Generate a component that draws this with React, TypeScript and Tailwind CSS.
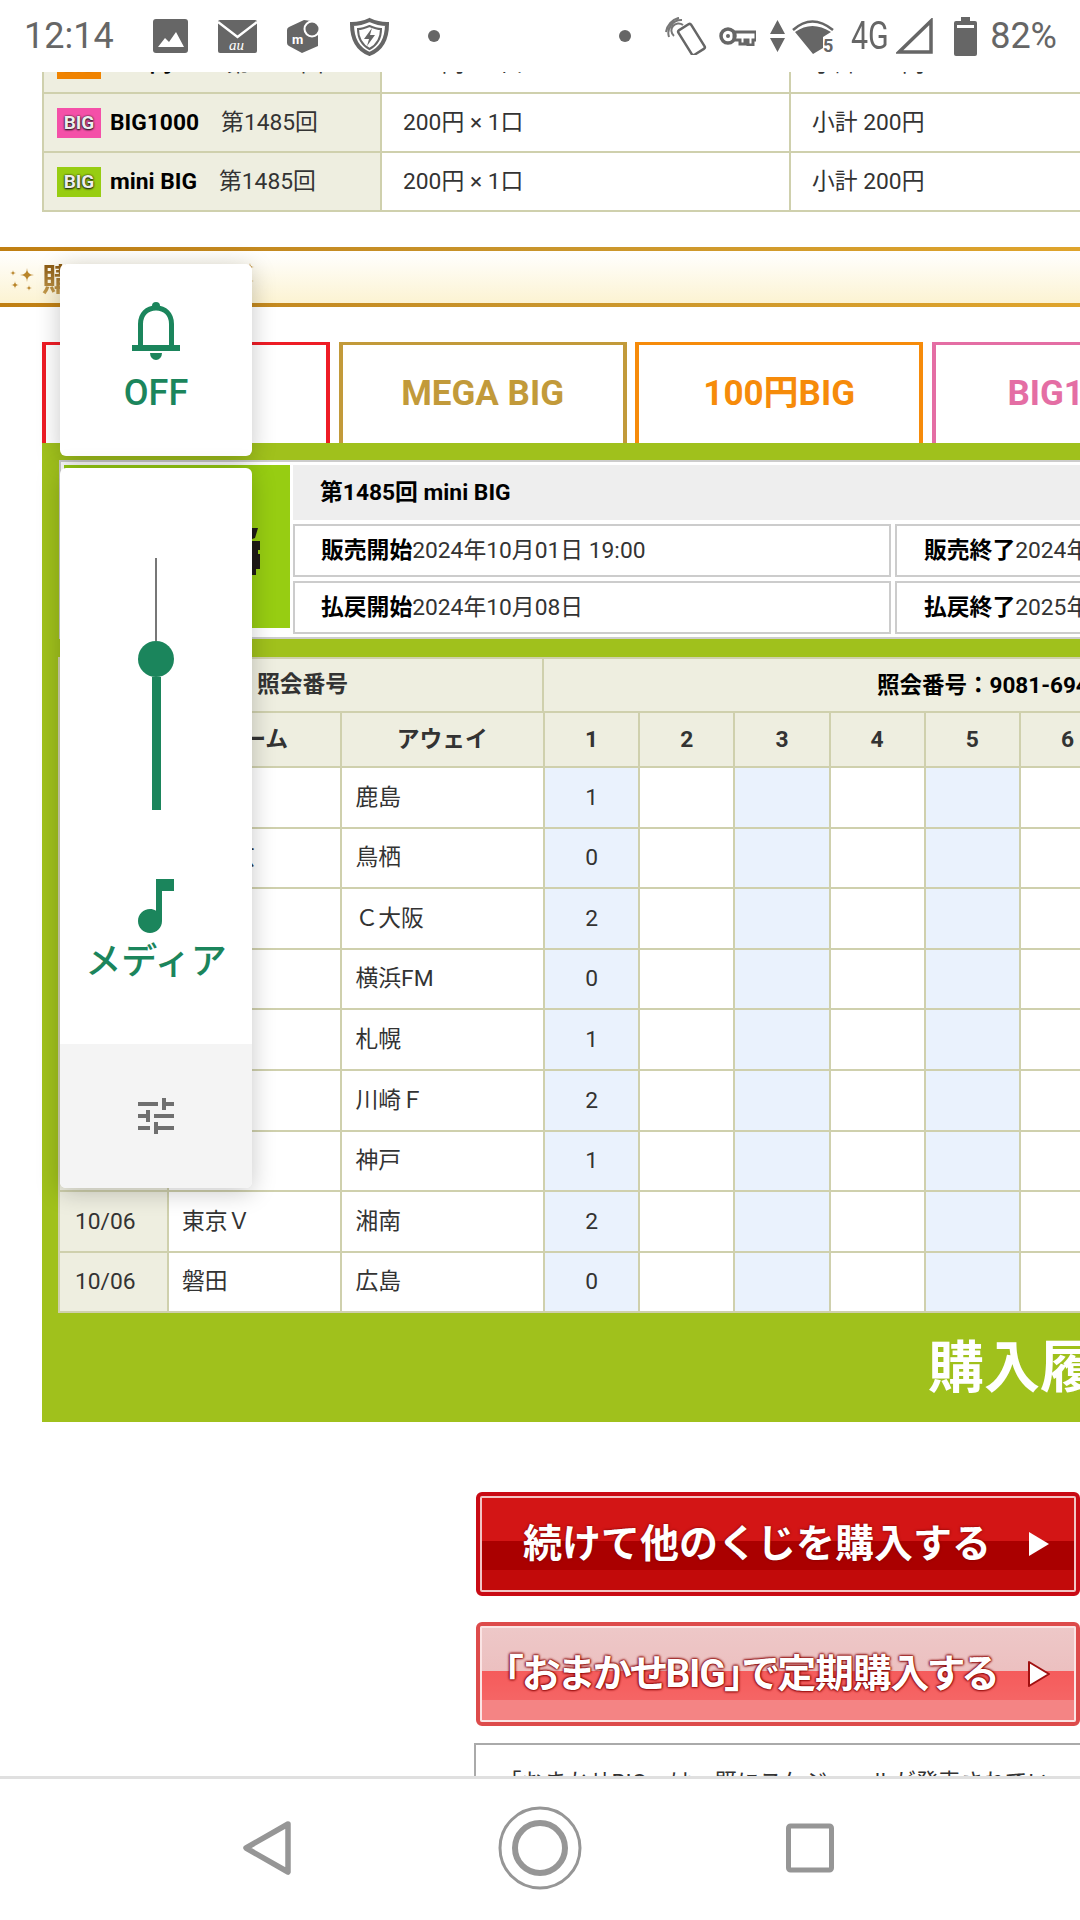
import React from 'react';

const FONT = 'font-[Roboto,"Noto_Sans_CJK_JP",sans-serif]';

const purchases = [
  { logo: 'bg-[#f08300]', name: '100円BIG', gap: 'ml-[18px]', price: '100円', total: '100円' },
  { logo: 'bg-[#f450a8]', name: 'BIG1000', gap: 'ml-[22px]', price: '200円', total: '200円' },
  { logo: 'bg-[#97cd12]', name: 'mini BIG', gap: 'ml-[22px]', price: '200円', total: '200円' },
];

const matches = [
  { date: '', home: '', away: '鹿島', pick: '1' },
  { date: '', home: 'FC東京', away: '鳥栖', pick: '0' },
  { date: '', home: '', away: 'Ｃ大阪', pick: '2' },
  { date: '', home: '', away: '横浜FM', pick: '0' },
  { date: '', home: '', away: '札幌', pick: '1' },
  { date: '', home: '', away: '川崎Ｆ', pick: '2' },
  { date: '', home: '', away: '神戸', pick: '1' },
  { date: '10/06', home: '東京Ｖ', away: '湘南', pick: '2' },
  { date: '10/06', home: '磐田', away: '広島', pick: '0' },
];

const cols = [1, 2, 3, 4, 5, 6];

const StatusBar = () => (
  <div className="flex h-[72px] shrink-0 items-center bg-white pl-[24px] pr-[23px] text-[#666]">
    <span className="w-[90px] text-[36px] leading-none">12:14</span>
    <svg className="ml-[39px]" width="35" height="34" viewBox="0 0 35 34">
      <rect width="35" height="34" rx="3" fill="#666" />
      <path d="M5 28 L12 19 L16 23 L23 13 L31 28Z" fill="#fff" />
    </svg>
    <svg className="ml-[30px]" width="39" height="33" viewBox="0 0 39 33">
      <rect width="39" height="33" rx="2" fill="#666" />
      <path d="M0 2 L19.5 17 L39 2" fill="none" stroke="#fff" strokeWidth="2.5" />
      <text x="11" y="30" fontSize="15" fontStyle="italic" fontFamily="Liberation Serif, serif" fill="#fff">au</text>
    </svg>
    <svg className="ml-[30px]" width="34" height="34" viewBox="0 0 34 34">
      <path d="M17 1 L2 8 Q0 9 0 11 V24 Q0 26 2 27 L15 34 L31 27 V12 L24 2Z" fill="#666" />
      <circle cx="25" cy="10" r="7.5" fill="#666" stroke="#fff" strokeWidth="2" />
      <text x="5" y="25" fontSize="13" fontWeight="700" fontFamily="Roboto, sans-serif" fill="#fff">m</text>
    </svg>
    <svg className="ml-[29px]" width="39" height="39" viewBox="0 0 39 39">
      <path d="M19.5 3 C26 6 31 7 37 7 C37 22 32 32 19.5 37 C7 32 2 22 2 7 C8 7 13 6 19.5 3Z" fill="none" stroke="#666" strokeWidth="4" />
      <path d="M19.5 9 C24 11 27 12 31 12 C31 22 27 28 19.5 32 C12 28 8 22 8 12 C12 12 15 11 19.5 9Z" fill="none" stroke="#666" strokeWidth="2" />
      <path d="M22 11 L14 22 H19 L17 29 L25 18 H20Z" fill="#666" />
    </svg>
    <span className="ml-[39px] h-[12px] w-[12px] rounded-full bg-[#666]" />

    <span className="ml-auto h-[12px] w-[12px] rounded-full bg-[#666]" />
    <svg className="ml-[34px]" width="42" height="38" viewBox="0 0 42 38">
      <path d="M4 20 A13 13 0 0 1 17 3 M1 15 A17 17 0 0 1 14 0.8 M9 19 A7 7 0 0 1 18 8" fill="none" stroke="#777" strokeWidth="2" />
      <rect x="19" y="8" width="15" height="29" rx="2" transform="rotate(-32 26.5 22.5)" fill="#fff" stroke="#666" strokeWidth="2.5" />
    </svg>
    <svg className="ml-[12px]" width="37" height="20" viewBox="0 0 37 20">
      <circle cx="9" cy="10" r="7" fill="none" stroke="#666" strokeWidth="3.5" />
      <circle cx="9" cy="10" r="2" fill="#666" />
      <path d="M15 6 H37 V14 H34 V19 H29 V14 H26 V18 H21 V14 H15Z" fill="none" stroke="#666" strokeWidth="3" />
    </svg>
    <svg className="ml-[14px]" width="15" height="32" viewBox="0 0 15 32">
      <path d="M7.5 0 L15 14 H0Z M0 18 H15 L7.5 32Z" fill="#666" />
    </svg>
    <svg className="ml-[7px]" width="43" height="36" viewBox="0 0 43 36">
      <path d="M1 12 Q20 -5 41 12" fill="none" stroke="#666" strokeWidth="2.5" />
      <path d="M3 14 Q20 2 39 14 L31 19 V30 L21 36Z" fill="#666" />
      <text x="31" y="34" fontSize="18" fontWeight="700" fontFamily="Roboto, sans-serif" fill="#666">5</text>
    </svg>
    <span className="ml-[16px] inline-block w-[38px] origin-left scale-x-[0.8] text-[38px] leading-none">4G</span>
    <svg className="ml-[7px]" width="37" height="36" viewBox="0 0 37 36">
      <path d="M35 3 V34 H3Z" fill="none" stroke="#666" strokeWidth="3.5" />
    </svg>
    <svg className="ml-[21px]" width="23" height="39" viewBox="0 0 23 39">
      <rect x="7" width="9" height="5" fill="#666" />
      <rect y="4" width="23" height="35" rx="2" fill="#666" />
      <rect x="3" y="8" width="17" height="3" fill="#fff" />
    </svg>
    <span className="ml-[13px] text-[36px] leading-none">82%</span>
  </div>
);

const Sparkle = ({ x, y, r }: { x: number; y: number; r: number }) => (
  <path d={`M${x} ${y - r} Q${x} ${y} ${x + r} ${y} Q${x} ${y} ${x} ${y + r} Q${x} ${y} ${x - r} ${y} Q${x} ${y} ${x} ${y - r}Z`} fill="#b9852a" />
);

const PurchaseTable = () => (
  <div className="-mt-[37px] ml-[42px] w-[1100px] border-l-2 border-[#cfd0ad]">
    {purchases.map((p) => (
      <div key={p.name} className="grid h-[59px] grid-cols-[338px_409px_1fr] border-b-2 border-[#cfd0ad] text-[22.8px] text-[#333]">
        <div className="flex items-center border-r-2 border-[#cfd0ad] bg-[#eeeee0] pt-[2px] pl-[13px]">
          <div className={`-mt-[2px] flex h-[30px] w-[44px] items-center justify-center text-[19px] leading-none font-bold text-[#eee] [text-shadow:0_0_2px_#111,0_1px_2px_#111] ${p.logo}`}>BIG</div>
          <span className="ml-[9px] font-bold text-black">{p.name}</span>
          <span className={p.gap}>第1485回</span>
        </div>
        <div className="flex items-center border-r-2 border-[#cfd0ad] pt-[2px] pl-[21px]">{p.price} × 1口</div>
        <div className="flex items-center pt-[2px] pl-[21px]">小計 {p.total}</div>
      </div>
    ))}
  </div>
);

const GoldLine = () => <div className="h-[4px] shrink-0 bg-gradient-to-r from-[#c07f12] via-[#c9952c] to-[#dfa42c]" />;

const TitleBand = () => (
  <div className="mt-[35px] flex h-[60px] flex-col">
    <GoldLine />
    <div className="flex flex-1 items-center bg-gradient-to-b from-white to-[#fcf3d2]">
      <svg width="42" height="44" viewBox="0 0 42 44">
        <Sparkle x={27} y={20} r={7} />
        <Sparkle x={13} y={18} r={3} />
        <Sparkle x={15} y={30} r={4} />
        <Sparkle x={29} y={33} r={3} />
      </svg>
      <span className="mt-[5px] bg-gradient-to-b from-[#8a5a10] to-[#c9a050] bg-clip-text text-[32px] leading-none font-bold text-transparent blur-[0.5px]">購入内容確認</span>
      <svg className="ml-[14px]" width="10" height="40" viewBox="0 0 10 40">
        <Sparkle x={2} y={10} r={4} />
        <Sparkle x={2} y={24} r={4} />
      </svg>
    </div>
    <GoldLine />
  </div>
);

const tabs = [
  { label: 'BIG', cls: 'border-[#ee1c25] text-[#ee1c25]' },
  { label: 'MEGA BIG', cls: 'border-[#c29a3a] text-[#c29a3a]' },
  { label: '100円BIG', cls: 'border-[#f68b0a] text-[#f68b0a]' },
  { label: 'BIG1000', cls: 'border-[#e46ea4] text-[#e46ea4]' },
];

const Tabs = () => (
  <div className="mt-[35px] ml-[42px] flex gap-[8.6px]">
    {tabs.map((t) => (
      <div key={t.label} className={`flex h-[101px] w-[288px] shrink-0 items-center justify-center border-x-4 border-t-[3px] text-[35px] font-bold ${t.cls}`}>
        {t.label}
      </div>
    ))}
  </div>
);

const DrawInfo = () => (
  <div className="ml-[17px] flex h-[179px] w-[1200px] border-2 border-[#ccc] bg-white p-[3px]">
    <div className="flex h-[163px] w-[226px] shrink-0 items-center justify-end bg-[#97cd12] pt-[10px] pr-[30px]">
      <svg width="8" height="47" viewBox="0 0 8 47">
        <path d="M0 0 L6 0 L3 10 L0 11Z M0 13 H8 V22 H6 V26 H8 V41 H4 V47 H0Z" fill="#1f1a17" />
      </svg>
    </div>
    <div className="ml-[3px] flex flex-1 flex-col gap-[4px] text-[22.8px] text-[#333]">
      <div className="flex h-[56px] items-center bg-[#eee] pt-[2px] pl-[27px] font-bold text-black">第1485回 mini BIG</div>
      <div className="flex gap-[4px]">
        <div className="flex h-[53px] w-[598px] items-center border-2 border-[#ccc] pt-[2px] pl-[26px]"><b className="text-black">販売開始</b>2024年10月01日 19:00</div>
        <div className="flex h-[53px] flex-1 items-center border-2 border-[#ccc] pt-[2px] pl-[27px]"><b className="text-black">販売終了</b>2024年10月05日</div>
      </div>
      <div className="flex gap-[4px]">
        <div className="flex h-[53px] w-[598px] items-center border-2 border-[#ccc] pt-[2px] pl-[26px]"><b className="text-black">払戻開始</b>2024年10月08日</div>
        <div className="flex h-[53px] flex-1 items-center border-2 border-[#ccc] pt-[2px] pl-[27px]"><b className="text-black">払戻終了</b>2025年10月08日</div>
      </div>
    </div>
  </div>
);

const cell = 'flex items-center border-r-2 border-b-2 border-[#cfd0ad] pt-[1px]';

const MatchTable = () => (
  <div className="mt-[18px] ml-[16px] w-[1300px] border-t-2 border-l-2 border-[#cfd0ad] text-[22.8px] text-[#333]">
    <div className="grid h-[54px] grid-cols-[484px_1fr] bg-[#eeeee0] font-bold">
      <div className={`${cell} justify-center pl-[3px]`}>照会番号</div>
      <div className={`${cell} pl-[333px] text-[22.5px] text-black`}>照会番号：9081-6940</div>
    </div>
    <div className="grid h-[55px] grid-cols-[109px_172.5px_203.5px_repeat(6,95.2px)] bg-[#eeeee0] font-bold">
      <div className={`${cell} justify-center`}>開催日</div>
      <div className={`${cell} justify-center`}>ホーム</div>
      <div className={`${cell} justify-center`}>アウェイ</div>
      {cols.map((c) => (
        <div key={c} className={`${cell} justify-center`}>{c}</div>
      ))}
    </div>
    {matches.map((m) => (
      <div key={m.away} className="grid h-[60.6px] grid-cols-[109px_172.5px_203.5px_repeat(6,95.2px)] bg-white">
        <div className={`${cell} bg-[#eeeee0] pl-[15px]`}>{m.date}</div>
        <div className={`${cell} pl-[13px]`}>{m.home}</div>
        <div className={`${cell} pl-[14px]`}>{m.away}</div>
        {cols.map((c) => (
          <div key={c} className={`${cell} justify-center ${c % 2 === 1 ? 'bg-[#eaf2fd]' : ''}`}>{c === 1 ? m.pick : ''}</div>
        ))}
      </div>
    ))}
  </div>
);

const Arrow = ({ outline }: { outline?: boolean }) => (
  <svg className="absolute top-[34px] right-[25px]" width="24" height="28" viewBox="0 0 24 28">
    <path d="M2 2 L22 14 L2 26Z" fill="#fff" stroke={outline ? '#a01010' : 'none'} strokeWidth="2" strokeLinejoin="round" />
  </svg>
);

const ActionButtons = () => (
  <div className="mt-[70px] ml-[476px] flex w-[604px] flex-col gap-[26px]">
    <div className="relative flex h-[104px] items-center rounded-[6px] border-[4px] border-[#c90a14] bg-[linear-gradient(#d31515_0,#d31515_47%,#aa0000_47%,#aa0000_77%,#c20a0a_77%)] pl-[43px] outline-2 -outline-offset-[6px] outline-[#f2c4c4]">
      <span className="text-[39px] leading-none font-bold text-white [text-shadow:0_0_3px_#7a0000]">続けて他のくじを購入する</span>
      <Arrow />
    </div>
    <div className="relative flex h-[104px] items-center rounded-[6px] border-[4px] border-[#dd4b4b] bg-[linear-gradient(#eec8c8_0,#ecc0c0_47%,#f55b5b_47%,#f56565_77%,#f48484_77%)] pl-[24px] outline-2 -outline-offset-[6px] outline-[#fbe4e4]">
      <span className="text-[39px] leading-none font-bold tracking-[-1.2px] text-white [font-feature-settings:'palt'] [text-shadow:0_0_2px_#8a0000,0_0_3px_#8a0000,0_0_3px_#8a0000,0_0_1px_#8a0000]">「おまかせBIG」で定期購入する</span>
      <Arrow outline />
    </div>
    <div className="-mt-[9px] ml-[-2px] h-[60px] border-t-2 border-l-2 border-[#aaa] pt-[26px] pl-[23px] text-[22.5px] leading-none whitespace-nowrap text-[#333]">
      「おまかせBIG」は、既にスケジュールが発表されてい
    </div>
  </div>
);

const VolumePanel = () => (
  <div className="absolute top-[264px] left-[60px] flex w-[192px] flex-col gap-[12px]">
    <div className="flex h-[192px] flex-col items-center rounded-[6px] bg-white pt-[38px] shadow-[0_4px_24px_rgba(0,0,0,0.22)]">
      <svg width="48" height="58" viewBox="0 0 48 58">
        <circle cx="24" cy="4" r="4" fill="#1b855c" />
        <path d="M8.5 44 V22 C8.5 12 15 6 24 6 C33 6 39.5 12 39.5 22 V44" fill="none" stroke="#1b855c" strokeWidth="5" />
        <rect y="43" width="48" height="6" fill="#1b855c" />
        <path d="M18 51 H30 A6 7 0 0 1 18 51Z" fill="#1b855c" />
      </svg>
      <span className="mt-[12px] text-[36px] leading-[42px] font-medium text-[#1b855c]">OFF</span>
    </div>
    <div className="flex h-[720px] flex-col overflow-hidden rounded-[6px] bg-white shadow-[0_4px_24px_rgba(0,0,0,0.22)]">
      <div className="flex h-[576px] flex-col items-center pt-[90px]">
        <div className="h-[83px] w-[2px] bg-[#777]" />
        <div className="h-[36px] w-[36px] rounded-full bg-[#1b855c]" />
        <div className="h-[133px] w-[9px] bg-[#1b855c]" />
        <svg className="mt-[60px]" width="72" height="72" viewBox="0 0 24 24">
          <path d="M12 3v10.55c-.59-.34-1.27-.55-2-.55-2.21 0-4 1.79-4 4s1.79 4 4 4 4-1.79 4-4V7h4V3h-6z" fill="#1b855c" />
        </svg>
        <span className="text-[36px] leading-[40px] font-medium text-[#1b855c]">メディア</span>
      </div>
      <div className="flex flex-1 items-center justify-center bg-[#f4f4f4]">
        <svg width="48" height="48" viewBox="0 0 24 24">
          <path d="M3 17v2h6v-2H3zM3 5v2h10V5H3zm10 16v-2h8v-2h-8v-2h-2v6h2zM7 9v2H3v2h4v2h2V9H7zm14 4v-2H11v2h10zm-6-4h2V7h4V5h-4V3h-2v6z" fill="#6f6f6f" />
        </svg>
      </div>
    </div>
  </div>
);

const NavBar = () => (
  <div className="flex h-[144px] shrink-0 items-center border-t-[3px] border-[#e0e0e0] bg-white pb-[4px] pl-[241px]">
    <svg width="52" height="58" viewBox="0 0 52 58">
      <path d="M47 5 L5 29 L47 53Z" fill="none" stroke="#969696" strokeWidth="5.5" strokeLinejoin="round" />
    </svg>
    <svg className="ml-[205px]" width="84" height="84" viewBox="0 0 84 84">
      <circle cx="42" cy="42" r="40" fill="none" stroke="#969696" strokeWidth="3" />
      <circle cx="42" cy="42" r="25" fill="none" stroke="#969696" strokeWidth="6" />
    </svg>
    <svg className="ml-[204px]" width="48" height="50" viewBox="0 0 48 50">
      <rect x="2.5" y="3" width="43" height="44" rx="2" fill="none" stroke="#969696" strokeWidth="5" />
    </svg>
  </div>
);

const App: React.FC = () => {
  return (
    <div className={`relative flex h-[1920px] w-[1080px] flex-col overflow-hidden bg-white ${FONT}`}>
      <StatusBar />
      <div className="flex-1 overflow-hidden">
        <PurchaseTable />
        <TitleBand />
        <Tabs />
        <div className="ml-[42px] h-[979px] w-[1200px] bg-[#a0c11c] pt-[17px]">
          <DrawInfo />
          <MatchTable />
          <div className="mt-[19px] pl-[886px] text-[56px] leading-[72px] font-bold text-white">購入履歴</div>
        </div>
        <ActionButtons />
      </div>
      <NavBar />
      <VolumePanel />
    </div>
  );
};

export default App;
